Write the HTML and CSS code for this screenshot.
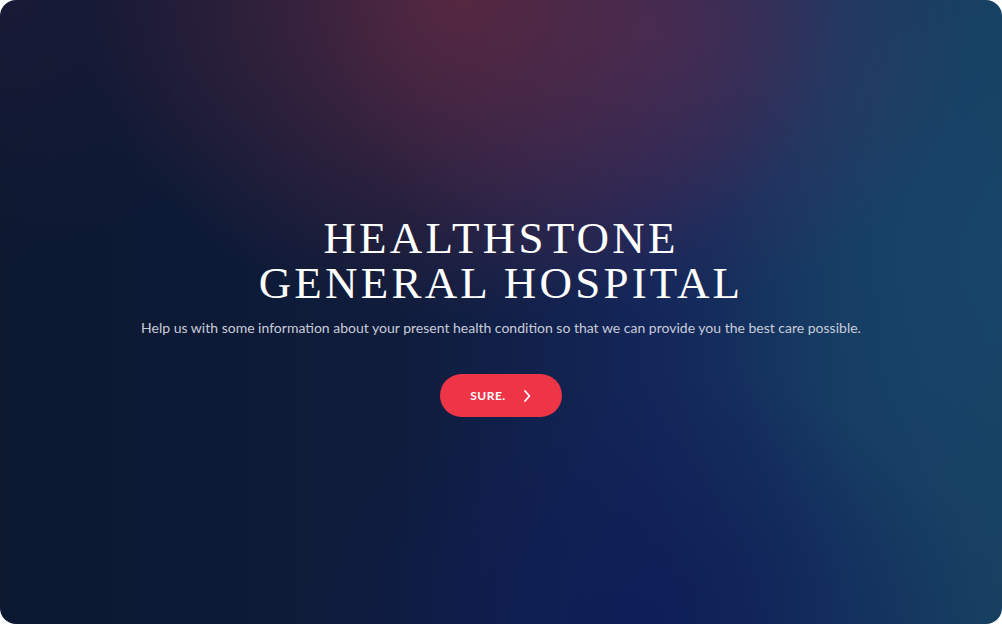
FILE: index.html
```html
<!DOCTYPE html>
<html lang="en">
<head>
<meta charset="utf-8">
<title>Healthstone General Hospital</title>
<link rel="stylesheet" href="styles.css">
</head>
<body>
<main class="card">
  <section class="hero">
    <h1 class="title">HEALTHSTONE<br>GENERAL HOSPITAL</h1>
    <p class="lead">Help us with some information about your present health condition so that we can provide you the best care possible.</p>
    <button class="cta" type="button">
      <span class="cta-label">SURE.</span>
      <svg class="cta-icon" width="10" height="14" viewBox="0 0 10 14" aria-hidden="true">
        <path d="M3 2 L7.5 7 L3 12" fill="none" stroke="#ffffff" stroke-width="1.8" stroke-linecap="round" stroke-linejoin="round"/>
      </svg>
    </button>
  </section>
</main>
</body>
</html>
```
FILE: styles.css
```css
html, body {
  margin: 0;
  padding: 0;
  background: #ffffff;
}

.card {
  width: 1002px;
  height: 624px;
  border-radius: 16px;
  overflow: hidden;
  display: flex;
  align-items: center;
  justify-content: center;
  background:
    radial-gradient(ellipse 380px 320px at 460px 0px, rgba(92, 40, 64, 0.9), rgba(92, 40, 64, 0) 100%),
    radial-gradient(ellipse 320px 280px at 650px 30px, rgba(70, 48, 92, 0.75), rgba(70, 48, 92, 0) 100%),
    radial-gradient(ellipse 340px 260px at 640px 624px, rgba(14, 28, 86, 0.85), rgba(14, 28, 86, 0) 100%),
    radial-gradient(ellipse 280px 440px at 1002px 260px, rgba(24, 70, 106, 0.85), rgba(24, 70, 106, 0) 100%),
    radial-gradient(ellipse 300px 260px at 0px 0px, rgba(30, 26, 56, 0.7), rgba(30, 26, 56, 0) 100%),
    linear-gradient(90deg, #0b1830 0%, #0f1c3c 40%, #14265a 65%, #163a62 85%, #173e5e 100%);
}

.hero {
  display: flex;
  flex-direction: column;
  align-items: center;
  margin-top: 9px;
}

.title {
  margin: 0;
  font-family: "Liberation Serif", "Times New Roman", serif;
  font-weight: 400;
  font-size: 45px;
  line-height: 45px;
  letter-spacing: 3.2px;
  color: #ffffff;
  text-align: center;
}

.lead {
  margin: 12px 0 0;
  font-family: Lato, "Open Sans", sans-serif;
  font-size: 14px;
  line-height: 20px;
  color: #c9ccd8;
  text-align: center;
}

.cta {
  margin-top: 36px;
  width: 122px;
  height: 43px;
  border: none;
  border-radius: 22px;
  background: #ee3548;
  display: flex;
  align-items: center;
  justify-content: center;
  gap: 16px;
  padding: 0;
  cursor: pointer;
}

.cta-label {
  font-family: Lato, "Open Sans", sans-serif;
  font-weight: 700;
  font-size: 12px;
  letter-spacing: 0.5px;
  color: #ffffff;
}

.cta-icon {
  display: block;
}
```
